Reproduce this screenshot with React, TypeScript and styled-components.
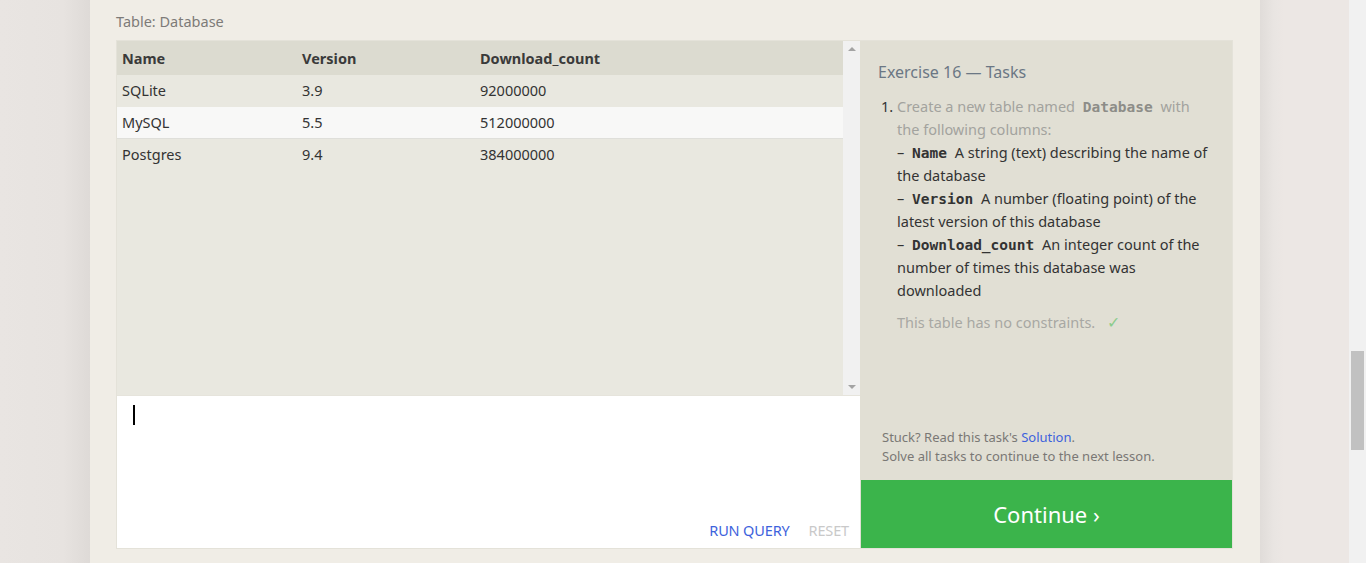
import React from "react";
import styled, { createGlobalStyle } from "styled-components";

const GlobalStyle = createGlobalStyle`
  html, body { margin: 0; padding: 0; }
  body {
    background: #e9e5e2;
    font-family: "Noto Sans", "Open Sans", sans-serif;
    overflow: hidden;
  }
`;

const Page = styled.div`
  display: flex;
  width: 1366px;
  height: 563px;
  overflow: hidden;
`;

const LeftGutter = styled.div`
  width: 90px;
  flex: none;
  background: linear-gradient(to right, #e9e5e2 0%, #e7e3e0 70%, #dedad7 100%);
`;

const RightGutter = styled.div`
  width: 89px;
  flex: none;
  background: linear-gradient(to right, #e0dcd9 0px, #e9e5e2 14px, #ece7e4 24px, #ece7e4 100%);
`;

const PageScroll = styled.div`
  width: 17px;
  flex: none;
  background: #f1f1f1;
  position: relative;
`;

const PageThumb = styled.div`
  position: absolute;
  left: 2px;
  right: 2px;
  top: 351px;
  height: 99px;
  background: #c1c1c1;
`;

const Card = styled.main`
  width: 1170px;
  flex: none;
  background: #f0ede6;
  padding: 11px 0 0 26px;
  box-sizing: border-box;
`;

const TableLabel = styled.div`
  font-size: 14.5px;
  line-height: 20px;
  color: #7d7b78;
  margin-bottom: 9px;
`;

const Exercise = styled.section`
  display: flex;
  width: 1117px;
  height: 509px;
  border: 1px solid #e4e2d9;
  box-sizing: border-box;
`;

const Workspace = styled.div`
  display: flex;
  flex-direction: column;
  width: 743px;
  flex: none;
`;

const ResultArea = styled.div`
  display: flex;
  height: 354px;
  background: #e9e8e0;
`;

const ResultTable = styled.table`
  flex: 1;
  align-self: flex-start;
  border-collapse: collapse;
  font-size: 14.5px;
  color: #333;
`;

const HeadCell = styled.th<{ $w?: number }>`
  background: #dcdbd0;
  text-align: left;
  font-weight: 700;
  height: 33px;
  padding: 0 5px;
  color: #3a3a3a;
  width: ${(p) => (p.$w ? `${p.$w}px` : "auto")};
`;

const Row = styled.tr<{ $alt?: boolean }>`
  background: ${(p) => (p.$alt ? "#f8f8f7" : "#e9e8e0")};
  border-top: 1px solid ${(p) => (p.$alt ? "#dfdfda" : "transparent")};
  border-bottom: 1px solid ${(p) => (p.$alt ? "#dfdfda" : "transparent")};
`;

const Cell = styled.td`
  height: 30px;
  padding: 0 5px 1px;
  color: #333;
  vertical-align: middle;
`;

const VScroll = styled.div`
  width: 17px;
  flex: none;
  background: #f1f1f1;
  display: flex;
  flex-direction: column;
  justify-content: space-between;
  align-items: center;
  padding: 6px 0;
  box-sizing: border-box;
`;

const Arrow = styled.div<{ $down?: boolean }>`
  width: 0;
  height: 0;
  border-left: 4px solid transparent;
  border-right: 4px solid transparent;
  ${(p) =>
    p.$down
      ? "border-top: 4px solid #a3a3a3;"
      : "border-bottom: 4px solid #a3a3a3;"}
`;

const Editor = styled.div`
  flex: 1;
  background: #fff;
  border-top: 1px solid #e6e4dc;
  display: flex;
  flex-direction: column;
  justify-content: space-between;
  padding: 9px 11px 9px 16px;
  box-sizing: border-box;
`;

const Caret = styled.div`
  width: 2px;
  height: 20px;
  background: #000;
`;

const Actions = styled.div`
  display: flex;
  justify-content: flex-end;
  gap: 19px;
  font-size: 14.5px;
  line-height: 18px;
`;

const ActionButton = styled.span<{ $disabled?: boolean }>`
  color: ${(p) => (p.$disabled ? "#c9c9c9" : "#3d62dc")};
  letter-spacing: -0.15px;
`;

const Tasks = styled.aside`
  flex: 1;
  display: flex;
  flex-direction: column;
  background: #e1dfd4;
`;

const TasksBody = styled.div`
  flex: 1;
  padding: 19px 17px 0 18px;
  display: flex;
  flex-direction: column;
`;

const TasksTitle = styled.h3`
  margin: 0 0 11px;
  font-weight: 400;
  font-size: 16px;
  line-height: 24px;
  color: #6b7784;
`;

const TaskList = styled.ol`
  margin: 0;
  padding-left: 19px;
  font-size: 14.5px;
  line-height: 23px;
  color: #333;
`;

const Done = styled.span`
  color: #a3a39e;
`;

const Code = styled.code<{ $muted?: boolean }>`
  font-family: "DejaVu Sans Mono", "Liberation Mono", monospace;
  font-weight: 700;
  font-size: 14.5px;
  line-height: 0;
  margin: 0 4px;
  color: ${(p) => (p.$muted ? "#8d8d88" : "#333")};
`;

const Constraint = styled.p`
  margin: 9px 0 0 19px;
  font-size: 14.5px;
  line-height: 23px;
  color: #a8a8a3;
`;

const Check = styled.span`
  color: #8ccc8c;
  font-size: 16px;
  margin-left: 12px;
`;

const Help = styled.div`
  margin-top: auto;
  padding: 0 4px 14px 4px;
  font-size: 13px;
  line-height: 19px;
  color: #7a7875;
`;

const Link = styled.span`
  color: #3d62dc;
`;

const ContinueButton = styled.button`
  height: 68px;
  border: none;
  background: #3bb44b;
  color: #fff;
  font-family: inherit;
  font-size: 22px;
  margin: 0 0 0 1px;
  padding: 0;
  width: calc(100% - 1px);
`;

export default function App() {
  const rows = [
    ["SQLite", "3.9", "92000000"],
    ["MySQL", "5.5", "512000000"],
    ["Postgres", "9.4", "384000000"],
  ];
  return (
    <Page>
      <GlobalStyle />
      <LeftGutter />
      <Card>
        <TableLabel>Table: Database</TableLabel>
        <Exercise>
          <Workspace>
            <ResultArea>
              <ResultTable>
                <thead>
                  <tr>
                    <HeadCell $w={170}>Name</HeadCell>
                    <HeadCell $w={168}>Version</HeadCell>
                    <HeadCell>Download_count</HeadCell>
                  </tr>
                </thead>
                <tbody>
                  {rows.map((r, i) => (
                    <Row key={r[0]} $alt={i === 1}>
                      <Cell>{r[0]}</Cell>
                      <Cell>{r[1]}</Cell>
                      <Cell>{r[2]}</Cell>
                    </Row>
                  ))}
                </tbody>
              </ResultTable>
              <VScroll>
                <Arrow />
                <Arrow $down />
              </VScroll>
            </ResultArea>
            <Editor>
              <Caret />
              <Actions>
                <ActionButton>RUN QUERY</ActionButton>
                <ActionButton $disabled>RESET</ActionButton>
              </Actions>
            </Editor>
          </Workspace>
          <Tasks>
            <TasksBody>
              <TasksTitle>Exercise 16 — Tasks</TasksTitle>
              <TaskList>
                <li>
                  <Done>
                    Create a new table named <Code $muted>Database</Code> with the following columns:
                  </Done>
                  <br />– <Code>Name</Code> A string (text) describing the name of the database
                  <br />– <Code>Version</Code> A number (floating point) of the latest version of this database
                  <br />– <Code>Download_count</Code> An integer count of the number of times this database was downloaded
                </li>
              </TaskList>
              <Constraint>
                This table has no constraints.<Check>✓</Check>
              </Constraint>
              <Help>
                Stuck? Read this task's <Link>Solution</Link>.
                <br />
                Solve all tasks to continue to the next lesson.
              </Help>
            </TasksBody>
            <ContinueButton>Continue ›</ContinueButton>
          </Tasks>
        </Exercise>
      </Card>
      <RightGutter />
      <PageScroll>
        <PageThumb />
      </PageScroll>
    </Page>
  );
}
